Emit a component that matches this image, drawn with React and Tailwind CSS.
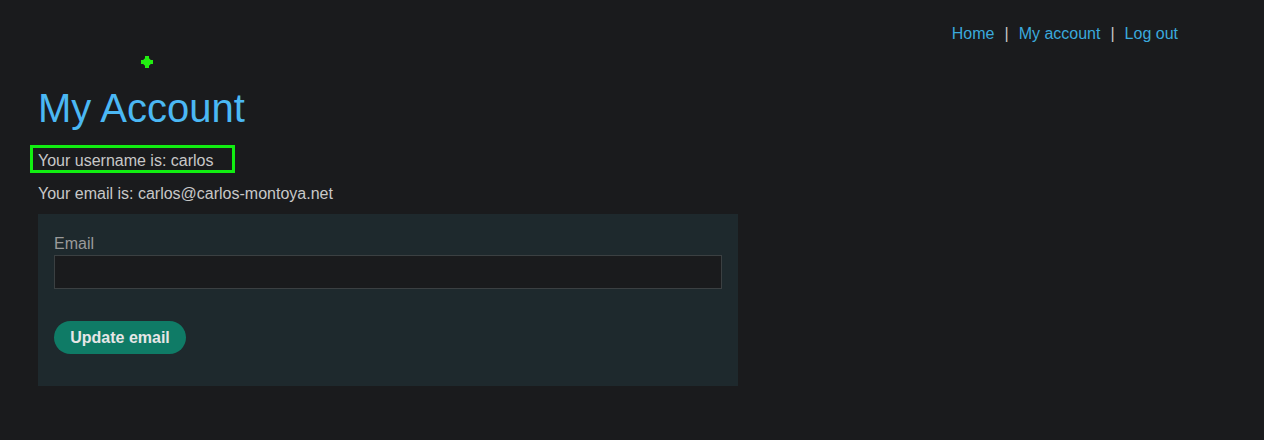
import React from 'react';

const App = () => {
    return (
        <div className="min-h-[440px] bg-[#1a1b1d] font-['Liberation_Sans',Arial,sans-serif] text-[#c8c8c8]">
            {/* Top nav */}
            <div className="flex justify-end pr-[86px] pt-[24px] text-[16px] leading-[20px]">
                <a href="#" className="text-[#3aa9dc]">Home</a>
                <span className="mx-[10px] text-[#c8c8c8]">|</span>
                <a href="#" className="text-[#3aa9dc]">My account</a>
                <span className="mx-[10px] text-[#c8c8c8]">|</span>
                <a href="#" className="text-[#3aa9dc]">Log out</a>
            </div>

            <div className="pl-[38px]">
                {/* Marker */}
                <div className="relative ml-[103px] mt-[12px] h-[12px] w-[12px]">
                    <div className="absolute left-[4px] top-0 h-[12px] w-[4px] bg-[#22ee11]" />
                    <div className="absolute left-0 top-[4px] h-[4px] w-[12px] bg-[#22ee11]" />
                    <div className="absolute left-[2px] top-[2px] h-[8px] w-[8px] rounded-sm bg-[#22ee11]" />
                </div>

                <h1 className="mt-[16px] text-[40px] leading-[48px] text-[#4bb8f4]">My Account</h1>

                <div className="mt-[13px] -ml-[8px] h-[28px] w-[205px] border-[3px] border-[#11ee11] pl-[5px] pt-[2px] text-[16px] leading-[22px]">
                    Your username is: carlos
                </div>

                <p className="mt-[12px] text-[16px] leading-[18px]">Your email is: carlos@carlos-montoya.net</p>

                <form className="mt-[11px] h-[172px] w-[700px] bg-[#1e292d] px-[16px] pt-[20px]">
                    <label className="block text-[16px] leading-[20px] text-[#9a9a9a]">Email</label>
                    <input
                        type="email"
                        className="mt-[1px] block h-[34px] w-full border border-[#3b4042] bg-[#1a1b1d] text-[#c8c8c8] outline-none"
                    />
                    <button
                        type="button"
                        className="mt-[32px] h-[33px] w-[132px] rounded-full bg-[#0f7b66] text-[16px] font-bold text-[#e6e6e6]"
                    >
                        Update email
                    </button>
                </form>
            </div>
        </div>
    );
};

export default App;
